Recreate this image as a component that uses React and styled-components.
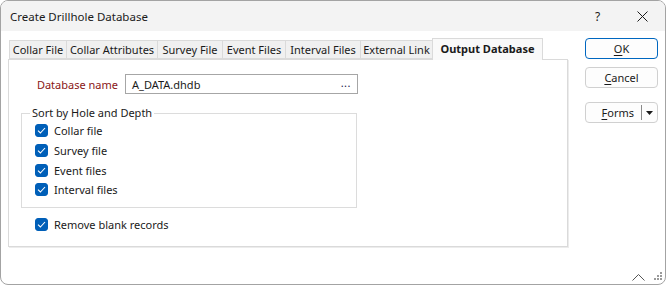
import React, { useState } from 'react';
import styled, { createGlobalStyle } from 'styled-components';

const GlobalStyle = createGlobalStyle`
  html, body {
    margin: 0;
    padding: 0;
    background: #ffffff;
  }
  body {
    font-family: "Noto Sans", "Open Sans", sans-serif;
    font-size: 11px;
    color: #1a1a1a;
  }
`;

const Window = styled.div`
  box-sizing: border-box;
  width: 666px;
  height: 285px;
  border: 1px solid #a3a3a3;
  border-radius: 8px;
  overflow: hidden;
  background: #ffffff;
  display: flex;
  flex-direction: column;
`;

const TitleBar = styled.div`
  height: 30px;
  flex: none;
  background: #f3f3f3;
  display: flex;
  align-items: center;
  padding-left: 9px;
  font-size: 11.5px;
`;

const Title = styled.div`
  flex: 1;
`;

const TitleButton = styled.div`
  width: ${p => p.$w || '45px'};
  height: 30px;
  display: flex;
  align-items: center;
  justify-content: center;
  font-size: 12px;
  color: #1a1a1a;
`;

const Body = styled.div`
  display: flex;
  padding: 7px 0 0 7px;
`;

const LeftCol = styled.div`
  width: 560px;
  flex: none;
  display: flex;
  flex-direction: column;
`;

const TabStrip = styled.div`
  display: flex;
  align-items: flex-end;
  height: 21px;
  padding-left: 1px;
  position: relative;
  z-index: 1;
`;

const Tab = styled.div`
  box-sizing: border-box;
  width: ${p => p.$w}px;
  height: ${p => (p.$active ? '22px' : '19px')};
  margin-bottom: ${p => (p.$active ? '-1px' : '0')};
  margin-left: -1px;
  display: flex;
  align-items: center;
  justify-content: center;
  background: ${p => (p.$active ? '#f9f9f9' : '#f0f0f0')};
  border: 1px solid #dadada;
  border-bottom: ${p => (p.$active ? 'none' : '1px solid #dadada')};
  font-weight: ${p => (p.$active ? 700 : 400)};
  padding-bottom: ${p => (p.$active ? '2px' : '0')};
  white-space: nowrap;
  cursor: default;
  &:first-child {
    margin-left: 0;
  }
`;

const Panel = styled.div`
  box-sizing: border-box;
  height: 188px;
  border: 1px solid #dadada;
  box-shadow: 1px 1px 0 #ececec;
  background: #ffffff;
  display: flex;
  flex-direction: column;
`;

const FieldRow = styled.div`
  display: flex;
  align-items: center;
  margin-top: 14px;
`;

const FieldLabel = styled.label`
  color: #8a1616;
  width: 109px;
  flex: none;
  white-space: nowrap;
  text-align: right;
  margin-right: 7px;
`;

const InputBox = styled.div`
  box-sizing: border-box;
  width: 233px;
  height: 20px;
  border: 1px solid #a6a6a6;
  display: flex;
  align-items: center;
  padding: 0 6px 0 6px;
`;

const InputText = styled.span`
  flex: 1;
`;

const Browse = styled.span`
  color: #22224a;
  letter-spacing: 0.5px;
  line-height: 1;
  padding-bottom: 3px;
`;

const GroupBox = styled.fieldset`
  box-sizing: border-box;
  width: 336px;
  margin: 11px 0 0 12px;
  padding: 0 0 7px 13px;
  border: 1px solid #dcdcdc;
  min-width: 0;
`;

const GroupLegend = styled.legend`
  margin-left: -5px;
  padding: 0 2px;
  line-height: 16px;
  height: 16px;
`;

const CheckRow = styled.label`
  display: flex;
  align-items: center;
  height: ${p => p.$h || '19.7px'};
  padding-left: ${p => p.$indent || '0'};
  margin-top: ${p => p.$mt || '0'};
  gap: 6px;
`;

const Box = styled.span`
  box-sizing: border-box;
  width: 13px;
  height: 13px;
  border-radius: 3px;
  background: ${p => (p.$on ? '#005fb8' : '#ffffff')};
  border: 1px solid ${p => (p.$on ? '#005fb8' : '#8a8a8a')};
  display: flex;
  align-items: center;
  justify-content: center;
  flex: none;
`;

const RightCol = styled.div`
  margin-left: 17px;
  width: 73px;
  display: flex;
  flex-direction: column;
`;

const Button = styled.button`
  box-sizing: border-box;
  width: 73px;
  height: 21px;
  margin-top: ${p => p.$mt || '0'};
  border: 1px solid ${p => (p.$primary ? '#0067c0' : '#d0d0d0')};
  border-radius: 4px;
  background: #fdfdfd;
  font-family: "Noto Sans", "Open Sans", sans-serif;
  font-size: 11px;
  color: #1a1a1a;
  padding: 0;
  display: flex;
  align-items: center;
  justify-content: center;
  u {
    text-decoration: underline;
    text-underline-offset: 2px;
  }
`;

const SplitMain = styled.span`
  flex: 1;
  text-align: right;
  padding-right: 7px;
`;

const SplitDivider = styled.span`
  width: 1px;
  height: 15px;
  background: #8a8a8a;
`;

const SplitArrow = styled.span`
  width: 15px;
  display: flex;
  align-items: center;
  justify-content: center;
`;

const Footer = styled.div`
  flex: 1;
  display: flex;
  justify-content: flex-end;
  align-items: flex-end;
  padding: 0 2px 3px 0;
  gap: 8px;
`;

const Check = () => (
  <svg width="9" height="7" viewBox="0 0 9 7">
    <polyline points="1,3.6 3.4,6 8,1" fill="none" stroke="#ffffff" strokeWidth="1.1" />
  </svg>
);

const CheckItem = ({ label, checked, onToggle, ...rest }) => (
  <CheckRow {...rest} onClick={onToggle}>
    <Box $on={checked}>{checked && <Check />}</Box>
    <span>{label}</span>
  </CheckRow>
);

const tabs = [
  { label: 'Collar File', w: 58 },
  { label: 'Collar Attributes', w: 92 },
  { label: 'Survey File', w: 66 },
  { label: 'Event Files', w: 64 },
  { label: 'Interval Files', w: 76 },
  { label: 'External Link', w: 73 },
  { label: 'Output Database', w: 111 },
];

const sortItems = ['Collar file', 'Survey file', 'Event files', 'Interval files'];

const App = () => {
  const [active, setActive] = useState('Output Database');
  const [checks, setChecks] = useState({
    'Collar file': true,
    'Survey file': true,
    'Event files': true,
    'Interval files': true,
    'Remove blank records': true,
  });

  const toggle = key => setChecks(c => ({ ...c, [key]: !c[key] }));

  return (
    <>
      <GlobalStyle />
      <Window>
        <TitleBar>
          <Title>Create Drillhole Database</Title>
          <TitleButton $w="45px">?</TitleButton>
          <TitleButton $w="45px">
            <svg width="11" height="11" viewBox="0 0 11 11">
              <path d="M0.5 0.5 L10.5 10.5 M10.5 0.5 L0.5 10.5" stroke="#1a1a1a" strokeWidth="1" />
            </svg>
          </TitleButton>
        </TitleBar>
        <Body>
          <LeftCol>
            <TabStrip>
              {tabs.map(t => (
                <Tab
                  key={t.label}
                  $w={t.w}
                  $active={t.label === active}
                  onClick={() => setActive(t.label)}
                >
                  {t.label}
                </Tab>
              ))}
            </TabStrip>
            <Panel>
              <FieldRow>
                <FieldLabel>Database name</FieldLabel>
                <InputBox>
                  <InputText>A_DATA.dhdb</InputText>
                  <Browse>...</Browse>
                </InputBox>
              </FieldRow>
              <GroupBox>
                <GroupLegend>Sort by Hole and Depth</GroupLegend>
                {sortItems.map(item => (
                  <CheckItem
                    key={item}
                    label={item}
                    checked={checks[item]}
                    onToggle={() => toggle(item)}
                  />
                ))}
              </GroupBox>
              <CheckItem
                label="Remove blank records"
                checked={checks['Remove blank records']}
                onToggle={() => toggle('Remove blank records')}
                $indent="26px"
                $mt="7px"
                $h="20px"
              />
            </Panel>
          </LeftCol>
          <RightCol>
            <Button $primary $mt="0">
              <u>O</u>K
            </Button>
            <Button $mt="8px">
              <u>C</u>ancel
            </Button>
            <Button $mt="14px">
              <SplitMain>
                <u>F</u>orms
              </SplitMain>
              <SplitDivider />
              <SplitArrow>
                <svg width="7" height="4" viewBox="0 0 7 4">
                  <polygon points="0,0 7,0 3.5,4" fill="#1a1a1a" />
                </svg>
              </SplitArrow>
            </Button>
          </RightCol>
        </Body>
        <Footer>
          <svg width="13" height="8" viewBox="0 0 13 8">
            <polyline points="0.5,7.5 6.5,1.5 12.5,7.5" fill="none" stroke="#555555" strokeWidth="1" />
          </svg>
          <svg width="10" height="10" viewBox="0 0 10 10">
            <g fill="#9a9a9a">
              <rect x="7" y="1" width="2" height="2" />
              <rect x="4" y="4" width="2" height="2" />
              <rect x="7" y="4" width="2" height="2" />
              <rect x="1" y="7" width="2" height="2" />
              <rect x="4" y="7" width="2" height="2" />
              <rect x="7" y="7" width="2" height="2" />
            </g>
          </svg>
        </Footer>
      </Window>
    </>
  );
};

export default App;
